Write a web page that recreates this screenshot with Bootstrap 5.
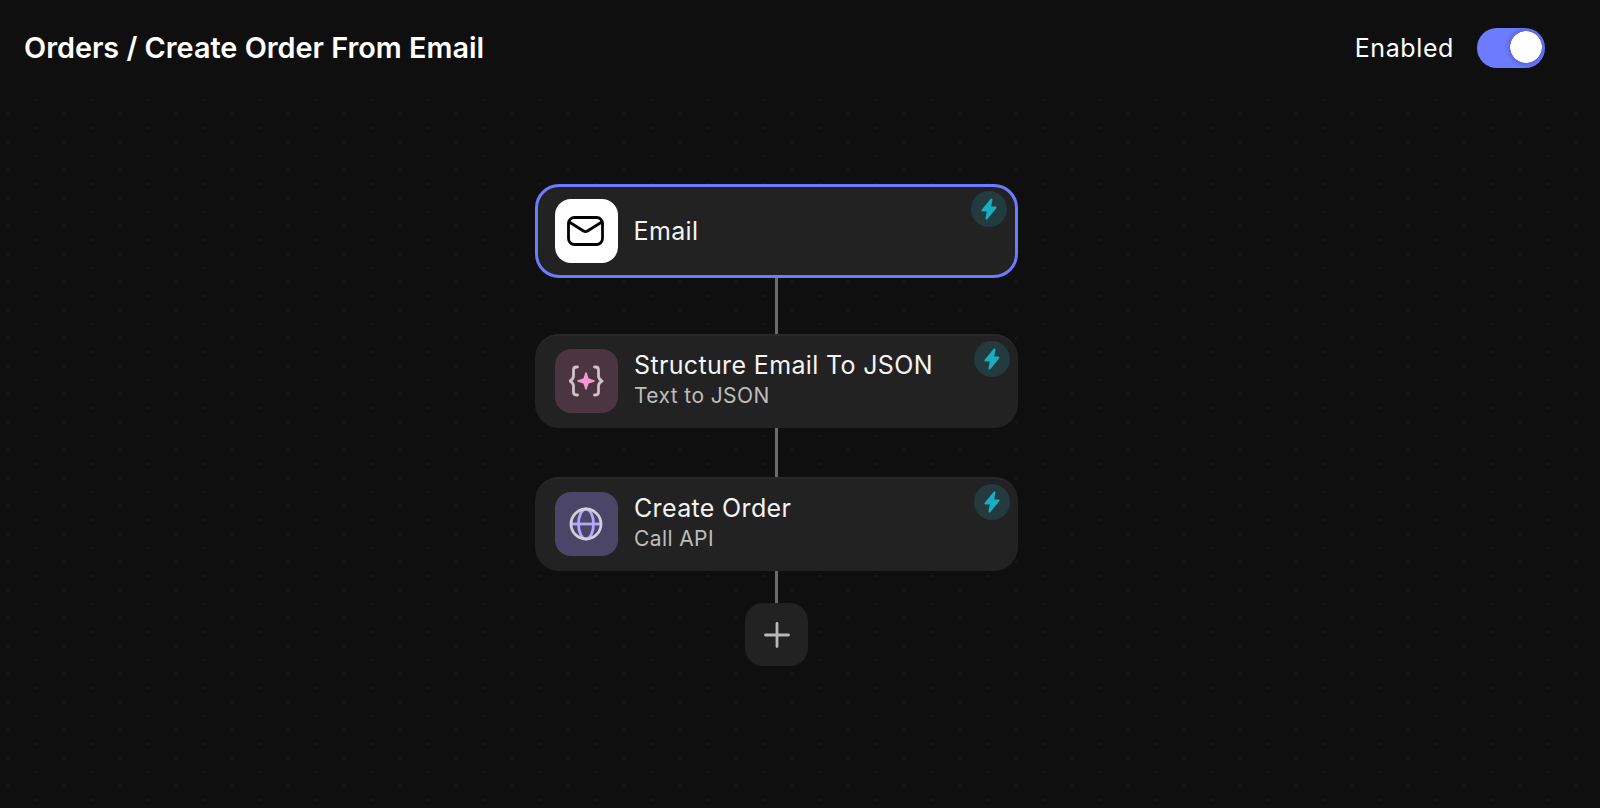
<!DOCTYPE html>
<html lang="en"><head><meta charset="utf-8"><title>Orders</title>
<link href="https://cdn.jsdelivr.net/npm/bootstrap@5.3.0/dist/css/bootstrap.min.css" rel="stylesheet">
<style>
html,body{height:100%}
body{background:#0f0f0f;font-family:Inter,"Liberation Sans",sans-serif;color:#fff;overflow:hidden;font-optical-sizing:none}
.page-shell{height:808px;
 background-image:radial-gradient(circle at 1px 1px,#191919 1px,transparent 1.5px),radial-gradient(circle at 1px 1px,#191919 1px,transparent 1.5px);
 background-size:56px 28px;background-position:35px 99px,63px 85px}
.top-head{height:96px;padding:0 55px 0 24px;background:#0f0f0f;align-items:flex-start}
.flow-title{font-size:28.800px;font-weight:600;line-height:34px;margin:31px 0 0}
.enabled-wrap{margin-top:28px;gap:23px}
.enabled-label{font-size:25px;letter-spacing:.6px;line-height:40px;font-weight:400}
.form-switch.switch-box{padding:0;margin:0;min-height:0;height:40px}
.form-switch .form-check-input.switch-big{width:68px;height:40px;margin:0;border:0;border-radius:20px;float:none;
 background-color:#6c7bff;background-position:0 0;background-size:100% 100%;
 background-image:radial-gradient(circle 16px at 49px 19px,#fff 15.5px,rgba(60,70,170,.35) 16px,rgba(108,123,255,0) 21px)}
.flow-col{width:483px;margin:88px 0 0 535px}
.step-card{height:94px;border-radius:24px;background:#222;border:0;box-shadow:inset 0 3px 0 -1px #282828;padding:0 19px 0 20px;gap:16px;position:relative}
.step-card.is-active{height:94px;border:3.500px solid #6c7bff;box-shadow:none;padding:0 16.500px}
.step-text{margin-top:-3px}
.step-name{font-size:25px;letter-spacing:.35px;line-height:30px;color:#f4f4f4}
.is-active .step-name{margin-top:-1px}
.step-sub{font-size:21px;letter-spacing:.4px;line-height:28px;color:#bdbdbd;margin-top:2px}
.step-icon{width:63px;height:64px;border-radius:16px;flex:none}
.icon-white{background:#fff}
.icon-pink{background:#4a3540}
.icon-violet{background:#4b4668}
.bolt-badge{position:absolute;top:7px;right:8px;width:36px;height:36px;border-radius:50%;background:#233a3f}
.is-active .bolt-badge{top:3.500px;right:8.500px}
.bolt-badge path{fill:#1aadc4;stroke:#1aadc4;stroke-width:2;stroke-linejoin:round}
.link-line{width:3px;background:#6b6b6b;margin-left:240px}
.add-btn{width:63px;height:63px;border-radius:18px;background:#222;margin-left:210px;border:0;padding:0}
</style></head>
<body>
<div class="page-shell">
 <header class="top-head d-flex justify-content-between">
  <h1 class="flow-title">Orders / Create Order From Email</h1>
  <div class="enabled-wrap d-flex align-items-center">
   <span class="enabled-label">Enabled</span>
   <div class="form-check form-switch switch-box"><input class="form-check-input switch-big" type="checkbox" role="switch" checked aria-label="Enabled"></div>
  </div>
 </header>
 <main class="flow-col d-flex flex-column">
  <div class="step-card is-active d-flex align-items-center">
   <div class="step-icon icon-white d-flex align-items-center justify-content-center">
    <svg width="38" height="32" viewBox="0 0 38 32" fill="none" stroke="#000" stroke-width="2.800" stroke-linejoin="round" stroke-linecap="round"><rect x="1.500" y="2.500" width="34" height="27" rx="6"/><path d="M3 7.500 16.500 16q2 1.200 4 0L34 7.500"/></svg>
   </div>
   <div class="step-name">Email</div>
   <span class="bolt-badge d-flex align-items-center justify-content-center"><svg width="16" height="22" viewBox="0 0 16 22"><path d="M10.500 1.500 1.500 12.500H7L5.500 20.500 14.500 9.500H9Z"/></svg></span>
  </div>
  <div class="link-line" style="height:56px"></div>
  <div class="step-card d-flex align-items-center">
   <div class="step-icon icon-pink d-flex align-items-center justify-content-center">
    <svg width="36" height="32" viewBox="1 0 36 32" fill="none"><path d="M9.500 2H8.500q-3 0-3 3V11q0 3-3.500 5 3.500 2 3.500 5v6q0 3 3 3h1M26.500 2h1q3 0 3 3V11q0 3 3.500 5-3.500 2-3.500 5v6q0 3-3 3h-1" stroke="#cdc3c9" stroke-width="2.800" stroke-linecap="round" stroke-linejoin="round"/><path d="M18 8 20 14 26 16 20 18 18 24 16 18 10 16 16 14Z" fill="#f59ad0" stroke="#f59ad0" stroke-width="1.500" stroke-linejoin="round"/></svg>
   </div>
   <div class="step-text"><div class="step-name">Structure Email To JSON</div><div class="step-sub">Text to JSON</div></div>
   <span class="bolt-badge d-flex align-items-center justify-content-center"><svg width="16" height="22" viewBox="0 0 16 22"><path d="M10.500 1.500 1.500 12.500H7L5.500 20.500 14.500 9.500H9Z"/></svg></span>
  </div>
  <div class="link-line" style="height:49px"></div>
  <div class="step-card d-flex align-items-center">
   <div class="step-icon icon-violet d-flex align-items-center justify-content-center">
    <svg width="36" height="36" viewBox="1 0 36 36" fill="none" stroke-width="2.800"><ellipse cx="18" cy="18" rx="7.500" ry="15" stroke="#b3a8ff"/><path d="M3 18h30" stroke="#b3a8ff"/><circle cx="18" cy="18" r="15" stroke="#d3d0de"/></svg>
   </div>
   <div class="step-text"><div class="step-name">Create Order</div><div class="step-sub">Call API</div></div>
   <span class="bolt-badge d-flex align-items-center justify-content-center"><svg width="16" height="22" viewBox="0 0 16 22"><path d="M10.500 1.500 1.500 12.500H7L5.500 20.500 14.500 9.500H9Z"/></svg></span>
  </div>
  <div class="link-line" style="height:32px"></div>
  <button class="add-btn d-flex align-items-center justify-content-center" type="button" aria-label="Add step">
   <svg width="26" height="26" viewBox="0 0 26 26"><path d="M13 1.500v23M1.500 13h23" stroke="#b9b9b9" stroke-width="2.800" stroke-linecap="round"/></svg>
  </button>
 </main>
</div>
<script src="https://cdn.jsdelivr.net/npm/bootstrap@5.3.0/dist/js/bootstrap.bundle.min.js"></script>
</body></html>
